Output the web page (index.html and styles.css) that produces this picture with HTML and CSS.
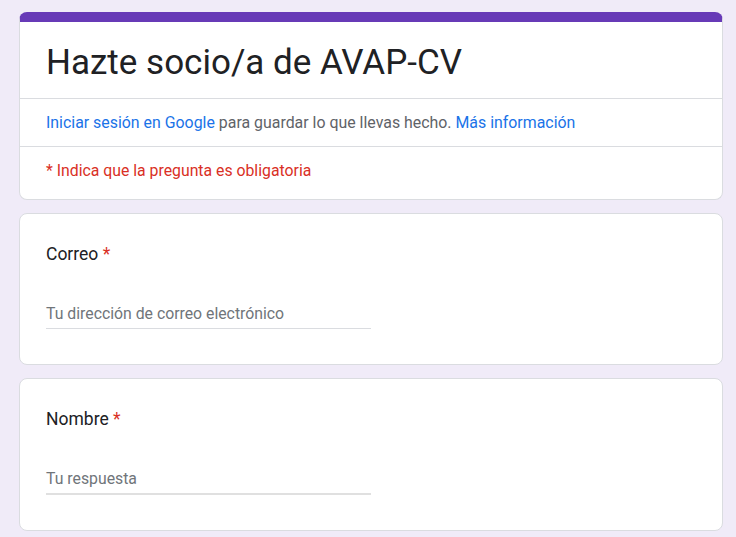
FILE: index.html
```html
<!DOCTYPE html>
<html lang="es">
    <head>
        <meta charset="UTF-8">
        <meta name="viewport" content="width=device-width, initial-scale=1.0">
        <title>Hazte socio/a de AVAP-CV</title>
        <link rel="stylesheet" href="styles.css">
    </head>
    <body>
        <div class="form">
            <div class="card card--header">
                <div class="header__title">
                    <h1>Hazte socio/a de AVAP-CV</h1>
                </div>
                <div class="header__login">
                    <a href="#">Iniciar sesión en Google</a> para guardar lo que llevas hecho. <a href="#">Más información</a>
                </div>
                <div class="header__required">* Indica que la pregunta es obligatoria</div>
            </div>

            <div class="card question">
                <div class="question__label">Correo <span class="required">*</span></div>
                <div class="question__input question__input--email">Tu dirección de correo electrónico</div>
            </div>

            <div class="card question">
                <div class="question__label">Nombre <span class="required">*</span></div>
                <div class="question__input">Tu respuesta</div>
            </div>
        </div>
    </body>
</html>
```

FILE: styles.css
```css
*, *:before, *:after {
    box-sizing: border-box;
}

body {
    margin: 0;
    background: #f0ebf8;
    font-family: Roboto, Arial, sans-serif;
    color: #202124;
}

.form {
    width: 704px;
    margin: 12px 0 0 19px;
    display: flex;
    flex-direction: column;
    gap: 13px;
}

.card {
    background: #fff;
    border: 1px solid #dadce0;
    border-radius: 8px;
}

.card--header {
    border-top: 10px solid #673ab7;
}

.header__title {
    padding: 17px 26px 11px;
    border-bottom: 1px solid #dadce0;
}

.header__title h1 {
    margin: 0;
    font-size: 35px;
    font-weight: 400;
    line-height: 48px;
}

.header__login {
    padding: 12px 26px;
    font-size: 15.9px;
    line-height: 23px;
    color: #5f6368;
    border-bottom: 1px solid #dadce0;
}

.header__login a {
    color: #1a73e8;
    text-decoration: none;
}

.header__required {
    padding: 13px 26px 17px;
    font-size: 15.8px;
    line-height: 22px;
    color: #d93025;
}

.question {
    padding: 28px 26px 35px;
}

.question__label {
    font-size: 17.5px;
    line-height: 24px;
}

.required {
    color: #d93025;
}

.question__input {
    width: 325px;
    margin-top: 37px;
    font-size: 15.8px;
    line-height: 22px;
    color: #70757a;
    padding-bottom: 3px;
    border-bottom: 2px solid #e0e0e0;
}

.question__input--email {
    border-bottom: 1px solid #dadce0;
    padding-bottom: 3px;
}
```
